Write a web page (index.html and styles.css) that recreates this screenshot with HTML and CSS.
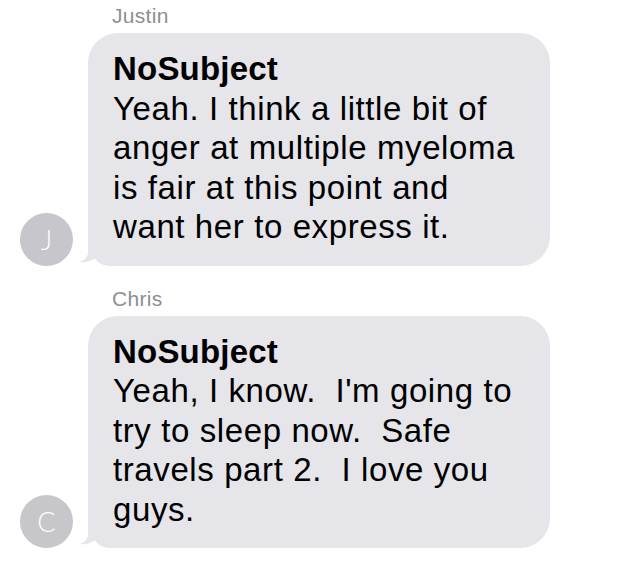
FILE: index.html
```html
<!DOCTYPE html>
<html lang="en">
<head>
    <meta charset="UTF-8">
    <meta name="viewport" content="width=device-width, initial-scale=1.0">
    <title>Messages</title>
    <link rel="stylesheet" href="styles.css">
</head>
<body>
    <div class="thread">
        <div class="message">
            <div class="sender">Justin</div>
            <div class="message-row">
                <div class="avatar">J</div>
                <div class="bubble">
                    <div class="subject">NoSubject</div>
                    <div class="text">Yeah. I think a little bit of anger at multiple myeloma is fair at this point and want her to express it.</div>
                    <svg class="tail" viewBox="-10 -28 36 28" width="36" height="28">
                        <path d="M0,-28 L0,-14 C0,-9 -3,-6 -8,-4 C-2,-3 3,-5 7,-8 C10,-3 15,0 26,0 L26,-28 Z"/>
                    </svg>
                </div>
            </div>
        </div>

        <div class="message">
            <div class="sender">Chris</div>
            <div class="message-row">
                <div class="avatar">C</div>
                <div class="bubble">
                    <div class="subject">NoSubject</div>
                    <div class="text">Yeah, I know.&nbsp; I'm going to try to sleep now.&nbsp; Safe travels part 2.&nbsp; I love you guys.</div>
                    <svg class="tail" viewBox="-10 -28 36 28" width="36" height="28">
                        <path d="M0,-28 L0,-14 C0,-9 -3,-6 -8,-4 C-2,-3 3,-5 7,-8 C10,-3 15,0 26,0 L26,-28 Z"/>
                    </svg>
                </div>
            </div>
        </div>
    </div>
</body>
</html>
```

FILE: styles.css
```css
body {
    margin: 0;
    background-color: #fff;
    font-family: "Liberation Sans", Arial, sans-serif;
}
.thread {
    display: flex;
    flex-direction: column;
    gap: 21px;
    padding-top: 4px;
}
.sender {
    font-size: 21px;
    line-height: 24px;
    letter-spacing: 0.3px;
    color: #8e8e93;
    padding-left: 112px;
    margin-bottom: 5px;
}
.message-row {
    display: flex;
    align-items: flex-end;
    gap: 15px;
    padding-left: 20px;
}
.avatar {
    width: 53px;
    height: 53px;
    border-radius: 50%;
    background: #c6c6cb;
    color: #fff;
    font-family: Lato, "Liberation Sans", sans-serif;
    font-weight: 300;
    font-size: 27px;
    display: flex;
    align-items: center;
    justify-content: center;
    flex-shrink: 0;
}
.bubble {
    position: relative;
    width: 462px;
    box-sizing: border-box;
    padding: 16px 32px 19px 25px;
    background: #e5e5ea;
    border-radius: 30px;
    border-bottom-left-radius: 24px;
    font-size: 33px;
    line-height: 39.5px;
    letter-spacing: 0.6px;
    color: #000;
}
.subject {
    font-weight: bold;
    letter-spacing: 0.2px;
}
.tail {
    position: absolute;
    left: -10px;
    bottom: 0;
    fill: #e5e5ea;
}
```
